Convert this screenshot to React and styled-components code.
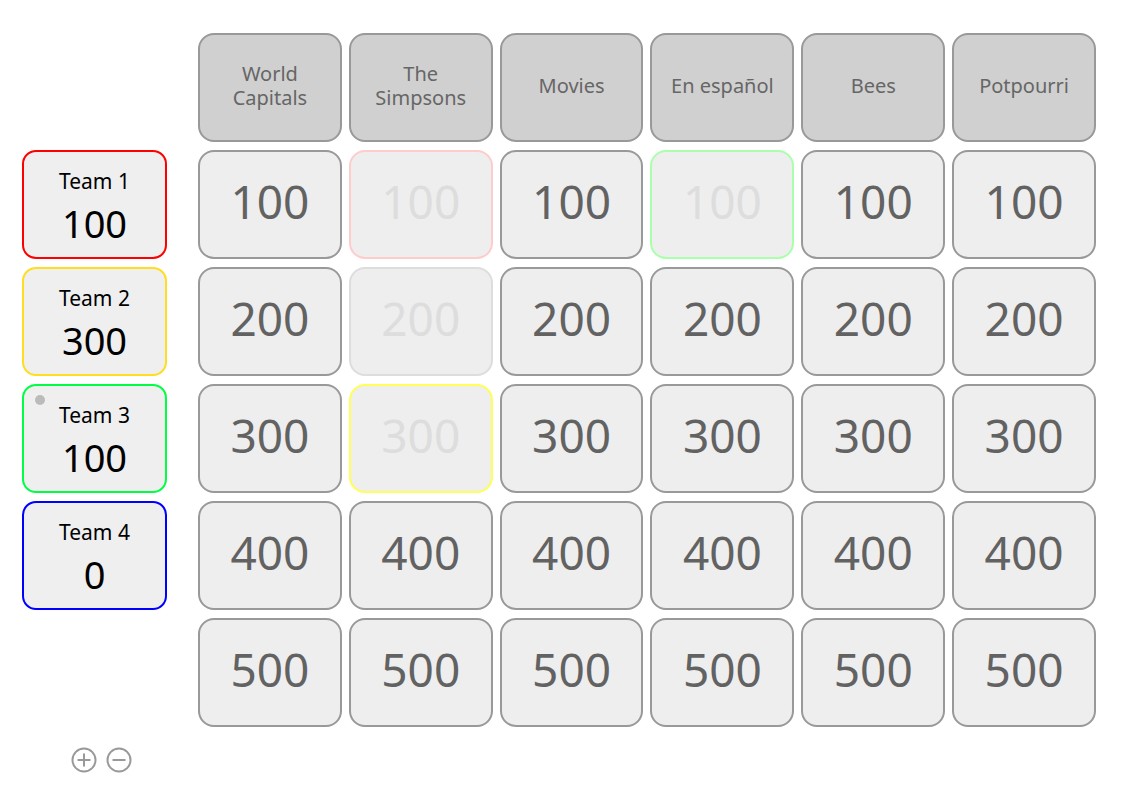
import React from 'react';
import styled, { createGlobalStyle } from 'styled-components';

const GlobalStyle = createGlobalStyle`
	body {
		margin: 0;
		background: #fff;
		font-family: "Noto Sans", "DejaVu Sans", sans-serif;
	}
`;

const categories = ['World Capitals', 'The Simpsons', 'Movies', 'En español', 'Bees', 'Potpourri'];
const values = [100, 200, 300, 400, 500];

// answered cells: key is "row-col", value is the border colour of the team that took it
const answered = {
	'0-1': '#ffcccc',
	'0-3': '#aaffaa',
	'1-1': '#dddddd',
	'2-1': '#ffff55',
};

const teams = [
	{ name: 'Team 1', score: 100, color: '#ff0000' },
	{ name: 'Team 2', score: 300, color: '#ffdd22' },
	{ name: 'Team 3', score: 100, color: '#00ff44', active: true },
	{ name: 'Team 4', score: 0, color: '#0000ff' },
];

const App = () => {
	return (
		<Page>
			<GlobalStyle />
			<Main>
				<Sidebar>
					{ teams.map(team => (
						<TeamCard key={ team.name } $color={ team.color }>
							{ team.active && <ActiveDot /> }
							<TeamName>{ team.name }</TeamName>
							<TeamScore>{ team.score }</TeamScore>
						</TeamCard>
					)) }
				</Sidebar>
				<Board>
					{ categories.map(cat => (
						<Category key={ cat }>{ cat }</Category>
					)) }
					{ values.map((value, row) =>
						categories.map((cat, col) => {
							const taken = answered[`${row}-${col}`];
							return (
								<Cell key={ cat + value } $taken={ taken }>{ value }</Cell>
							);
						})
					) }
				</Board>
			</Main>
			<Controls>
				<RoundButton aria-label="Add team">
					<svg width="26" height="26" viewBox="0 0 26 26">
						<circle cx="13" cy="13" r="11.5" fill="none" stroke="#999" strokeWidth="2" />
						<path d="M13 6.5v13M6.5 13h13" stroke="#999" strokeWidth="2" />
					</svg>
				</RoundButton>
				<RoundButton aria-label="Remove team">
					<svg width="26" height="26" viewBox="0 0 26 26">
						<circle cx="13" cy="13" r="11.5" fill="none" stroke="#999" strokeWidth="2" />
						<path d="M6.5 13h13" stroke="#999" strokeWidth="2" />
					</svg>
				</RoundButton>
			</Controls>
		</Page>
	);
};

const Page = styled.div`
	padding: 33px 0 0 22px;
	display: flex;
	flex-direction: column;
`;

const Main = styled.div`
	display: flex;
	gap: 31px;
	align-items: flex-start;
`;

const Sidebar = styled.div`
	width: 145px;
	margin-top: 117px;
	display: flex;
	flex-direction: column;
	gap: 8px;
`;

const TeamCard = styled.div`
	position: relative;
	box-sizing: border-box;
	height: 109px;
	padding-top: 3px;
	border: 2px solid ${ ({ $color }) => $color };
	border-radius: 14px;
	background: #efefef;
	display: flex;
	flex-direction: column;
	align-items: center;
	justify-content: center;
	gap: 9px;
	color: #000;
`;

const ActiveDot = styled.span`
	position: absolute;
	left: 11px;
	top: 9px;
	width: 10px;
	height: 10px;
	border-radius: 50%;
	background: #bbb;
`;

const TeamName = styled.div`
	font-size: 21px;
	line-height: 24px;
`;

const TeamScore = styled.div`
	font-size: 38px;
	line-height: 42px;
`;

const Board = styled.div`
	width: 898px;
	display: grid;
	grid-template-columns: repeat(6, 1fr);
	grid-auto-rows: 109px;
	column-gap: 7px;
	row-gap: 8px;
`;

const Tile = styled.div`
	box-sizing: border-box;
	border: 2px solid #999;
	border-radius: 16px;
	display: flex;
	align-items: center;
	justify-content: center;
	text-align: center;
	color: #666;
`;

const Category = styled(Tile)`
	background: #d0d0d0;
	font-size: 20px;
	line-height: 24px;
	padding: 0 16px 4px;
`;

const Cell = styled(Tile)`
	background: #eeeeee;
	font-size: 46px;
	padding-bottom: 8px;
	border-color: ${ ({ $taken }) => $taken || '#999' };
	color: ${ ({ $taken }) => $taken ? '#dddddd' : '#626262' };
	cursor: ${ ({ $taken }) => $taken ? 'default' : 'pointer' };
`;

const Controls = styled.div`
	display: flex;
	gap: 9px;
	padding-left: 49px;
	margin-top: 20px;
`;

const RoundButton = styled.button`
	border: none;
	background: none;
	padding: 0;
	width: 26px;
	height: 26px;
	cursor: pointer;
	display: block;
`;

export default App;
